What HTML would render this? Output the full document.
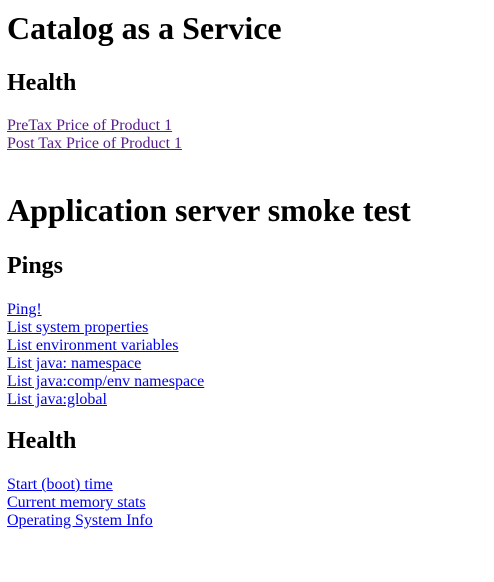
<!DOCTYPE html>
<html><head><style>
body{margin:10px 7px 8px 7px;font-family:"Liberation Serif",serif;font-size:16px;background:#fff;color:#000}
h1{font-size:32px;margin:21.44px 0 24px 0}
h2{font-size:24px;margin:22.5px 0 20.5px 0}
a{color:#0000EE}
a.v{color:#551A8B}
</style></head><body>
<h1 style="margin-top:0;margin-bottom:21.44px">Catalog as a Service</h1>
<h2>Health</h2>
<div><a class="v" href="#">PreTax Price of Product 1</a><br><a class="v" href="#">Post Tax Price of Product 1</a><br><br></div>
<h1>Application server smoke test</h1>
<h2>Pings</h2>
<div><a href="#">Ping!</a><br><a href="#">List system properties</a><br><a href="#">List environment variables</a><br><a href="#">List java: namespace</a><br><a href="#">List java:comp/env namespace</a><br><a href="#">List java:global</a></div>
<h2 style="margin-top:19.5px">Health</h2>
<div><a href="#">Start (boot) time</a><br><a href="#">Current memory stats</a><br><a href="#">Operating System Info</a></div>
</body></html>
